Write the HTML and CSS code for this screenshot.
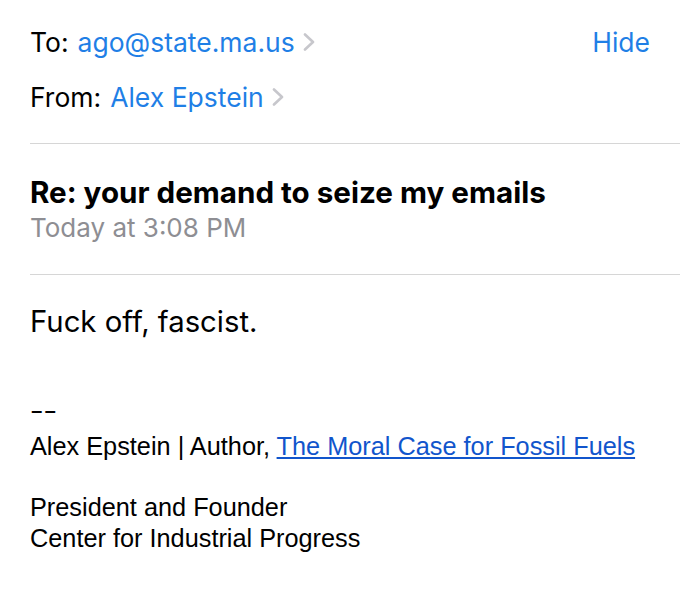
FILE: index.html
```html
<!DOCTYPE html>
<html>
<head>
<meta charset="utf-8">
<link rel="stylesheet" href="styles.css">
</head>
<body>
<div class="mail">
  <div class="header">
    <div class="row">
      <span class="label">To:</span>
      <span class="addr">ago@state.ma.us</span>
      <svg class="chev" width="12" height="18" viewBox="0 0 12 18"><path d="M2 1.5 L10 9 L2 16.5" fill="none" stroke="#c7c7cc" stroke-width="2.6" stroke-linecap="round" stroke-linejoin="round"/></svg>
      <span class="hide">Hide</span>
    </div>
    <div class="row row-from">
      <span class="label">From:</span>
      <span class="addr">Alex Epstein</span>
      <svg class="chev" width="12" height="18" viewBox="0 0 12 18"><path d="M2 1.5 L10 9 L2 16.5" fill="none" stroke="#c7c7cc" stroke-width="2.6" stroke-linecap="round" stroke-linejoin="round"/></svg>
    </div>
  </div>
  <div class="sep"></div>
  <div class="subject-block">
    <div class="subject">Re: your demand to seize my emails</div>
    <div class="date">Today at 3:08 PM</div>
  </div>
  <div class="sep"></div>
  <div class="content">
    <div class="msg">Fuck off, fascist.</div>
    <div class="sig">
      <div class="dash"><span class="dash-text">--</span></div>
      <div>Alex Epstein | Author, <a class="link" href="#">The Moral Case for Fossil Fuels</a></div>
      <div class="gap"></div>
      <div>President and Founder</div>
      <div>Center for Industrial Progress</div>
    </div>
  </div>
</div>
</body>
</html>
```
FILE: styles.css
```css
html, body {
  margin: 0;
  padding: 0;
  background: #ffffff;
}
.mail {
  padding-left: 30px;
  font-family: "Inter", "Liberation Sans", sans-serif;
  color: #000;
}
.header {
  padding-top: 22px;
  padding-right: 30px;
}
.row {
  display: flex;
  align-items: center;
  height: 40px;
  font-size: 26.5px;
  line-height: 40px;
}
.row-from {
  margin-top: 15px;
}
.label {
  margin-right: 9px;
}
.addr {
  color: #1f7fe6;
}
.chev {
  margin-left: 8px;
}
.hide {
  margin-left: auto;
  color: #1f7fe6;
}
.sep {
  height: 1px;
  background: #d6d6d6;
}
.header + .sep {
  margin-top: 26px;
}
.subject-block {
  padding: 30px 0 28px;
}
.subject {
  font-weight: 700;
  font-size: 29.6px;
  line-height: 36px;
}
.date {
  font-size: 26px;
  line-height: 36px;
  color: #8e8e93;
}
.content {
  padding-top: 27px;
}
.msg {
  font-size: 29.3px;
  line-height: 40px;
}
.sig {
  margin-top: 53px;
  font-family: "Liberation Sans", Arial, sans-serif;
  font-size: 25.3px;
  line-height: 30.5px;
}
.dash {
  margin-bottom: 5.5px;
}
.dash-text {
  display: inline-block;
  transform: scaleX(1.6);
  transform-origin: left center;
}
.gap {
  height: 30.5px;
}
.link {
  color: #1155cc;
  text-decoration: underline;
}
```
